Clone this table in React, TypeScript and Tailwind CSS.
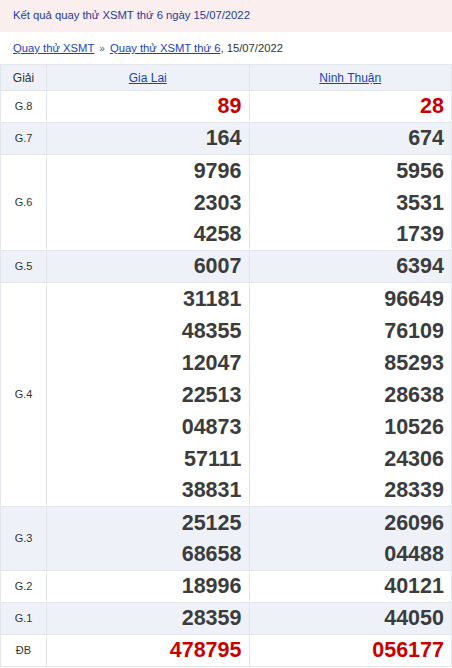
const rows: { label: string; a: string[]; b: string[]; red?: boolean }[] = [
  { label: "G.8", a: ["89"], b: ["28"], red: true },
  { label: "G.7", a: ["164"], b: ["674"] },
  { label: "G.6", a: ["9796", "2303", "4258"], b: ["5956", "3531", "1739"] },
  { label: "G.5", a: ["6007"], b: ["6394"] },
  {
    label: "G.4",
    a: ["31181", "48355", "12047", "22513", "04873", "57111", "38831"],
    b: ["96649", "76109", "85293", "28638", "10526", "24306", "28339"],
  },
  { label: "G.3", a: ["25125", "68658"], b: ["26096", "04488"] },
  { label: "G.2", a: ["18996"], b: ["40121"] },
  { label: "G.1", a: ["28359"], b: ["44050"] },
  { label: "ĐB", a: ["478795"], b: ["056177"], red: true },
];

function Cell({ nums, red }: { nums: string[]; red?: boolean }) {
  return (
    <td className="border border-[#e3e6ea] p-0 pr-[7px] text-right align-middle">
      {nums.map((n, i) => (
        <div
          key={n}
          className={`${i === nums.length - 1 ? "h-[31px] leading-[31px]" : "h-8 leading-8"} text-[21.5px] font-bold ${red ? "text-[#c80000]" : "text-[#3c3c3c]"}`}
        >
          {n}
        </div>
      ))}
    </td>
  );
}

export default function App() {
  return (
    <div className="w-[452px] bg-white font-['Liberation_Sans',Arial,sans-serif] text-[12px] text-[#333]">
      <div className="h-[32px] bg-[#fbeeee] pl-[13px] text-[11.25px] leading-[31px] text-[#1b3d9b]">
        Kết quả quay thử XSMT thứ 6 ngày 15/07/2022
      </div>
      <div className="h-[32px] pl-[13px] text-[11.25px] leading-[32px]">
        <a href="#" className="text-[#1a3fc4] underline">Quay thử XSMT</a>
        <span className="mx-[5px] text-[10px] text-[#555]">»</span>
        <a href="#" className="text-[#1a3fc4] underline">Quay thử XSMT thứ 6</a>
        <span>, 15/07/2022</span>
      </div>
      <table className="w-full border-collapse table-fixed">
        <colgroup>
          <col className="w-[46px]" />
          <col />
          <col />
        </colgroup>
        <thead>
          <tr className="h-[26px] bg-[#eef2f8]">
            <th className="border border-[#e3e6ea] font-normal text-[12px] text-[#333]">Giải</th>
            <th className="border border-[#e3e6ea] font-normal">
              <a href="#" className="text-[#1a3fc4] underline">Gia Lai</a>
            </th>
            <th className="border border-[#e3e6ea] font-normal">
              <a href="#" className="text-[#1a3fc4] underline">Ninh Thuận</a>
            </th>
          </tr>
        </thead>
        <tbody>
          {rows.map((r, i) => (
            <tr key={r.label} className={i % 2 === 1 ? "bg-[#eef2f8]" : "bg-white"}>
              <td className="border border-[#e3e6ea] p-0 text-center text-[11px] text-[#333]">{r.label}</td>
              <Cell nums={r.a} red={r.red} />
              <Cell nums={r.b} red={r.red} />
            </tr>
          ))}
        </tbody>
      </table>
    </div>
  );
}
